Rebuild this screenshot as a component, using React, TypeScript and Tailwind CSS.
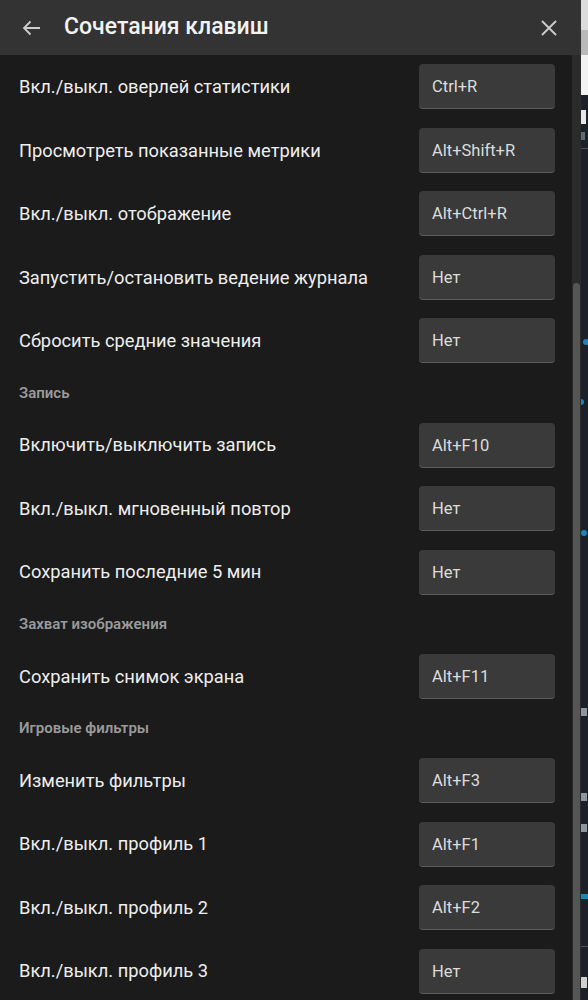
import { Fragment } from "react";

type Item = { label: string; keys: string };
type Group = { title?: string; items: Item[] };

const groups: Group[] = [
  {
    items: [
      { label: "Вкл./выкл. оверлей статистики", keys: "Ctrl+R" },
      { label: "Просмотреть показанные метрики", keys: "Alt+Shift+R" },
      { label: "Вкл./выкл. отображение", keys: "Alt+Ctrl+R" },
      { label: "Запустить/остановить ведение журнала", keys: "Нет" },
      { label: "Сбросить средние значения", keys: "Нет" },
    ],
  },
  {
    title: "Запись",
    items: [
      { label: "Включить/выключить запись", keys: "Alt+F10" },
      { label: "Вкл./выкл. мгновенный повтор", keys: "Нет" },
      { label: "Сохранить последние 5 мин", keys: "Нет" },
    ],
  },
  {
    title: "Захват изображения",
    items: [{ label: "Сохранить снимок экрана", keys: "Alt+F11" }],
  },
  {
    title: "Игровые фильтры",
    items: [
      { label: "Изменить фильтры", keys: "Alt+F3" },
      { label: "Вкл./выкл. профиль 1", keys: "Alt+F1" },
      { label: "Вкл./выкл. профиль 2", keys: "Alt+F2" },
      { label: "Вкл./выкл. профиль 3", keys: "Нет" },
    ],
  },
];

const ShortcutRow = ({ label, keys }: Item) => (
  <div className="flex h-[63.5px] shrink-0 items-center justify-between">
    <span className="text-[18.3px] text-[#eeeeee]">{label}</span>
    <div className="flex h-[45px] w-[136px] items-center rounded-[4px] border-b border-[#5c5c5c] bg-[#3a3a3a] pl-[13px] pt-[3px] text-[16.5px] text-[#dcdcdc]">
      {keys}
    </div>
  </div>
);

// кусок страницы, выглядывающий справа из-под панели
const PageEdge = () => (
  <div className="flex h-full w-[7px] flex-col overflow-hidden bg-[#1c2127]">
    <div className="h-[30px] shrink-0 bg-[#dcdcdc]" />
    <div className="h-[25px] shrink-0 bg-[#b9b9b9]" />
    <div className="h-[40px] shrink-0 bg-[#f2f2f2]" />
    <div className="mt-[15px] h-[14px] w-[5px] shrink-0 bg-[#e6e6e6]" />
    <div className="mt-[8px] h-[8px] w-[4px] shrink-0 bg-[#5d6a76]" />
    <div className="mt-[8px] h-px shrink-0 bg-[#4a525a]" />
    <div className="ml-[2px] mt-[190px] h-[6px] w-[6px] shrink-0 rounded-full bg-[#1a86c0]" />
    <div className="mt-[54px] h-[6px] w-[3px] shrink-0 rounded-r-full bg-[#1a86c0]" />
    <div className="mt-[125px] h-[6px] w-[6px] shrink-0 rounded-full bg-[#1a86c0]" />
    <div className="mt-[172px] h-[8px] w-[6px] shrink-0 bg-[#8e959b]" />
    <div className="mt-[77px] h-[8px] w-[6px] shrink-0 bg-[#8e959b]" />
    <div className="mt-[23px] h-[8px] w-[6px] shrink-0 bg-[#8e959b]" />
    <div className="mt-[62px] h-[5px] shrink-0 bg-[#1a86c0]" />
    <div className="mt-[47px] h-px shrink-0 bg-[#4a525a]" />
    <div className="mt-[30px] h-[11px] w-[6px] shrink-0 bg-[#d0d0d0]" />
  </div>
);

const App = () => {
  return (
    <div
      className="flex h-[1000px] w-[588px] overflow-hidden bg-[#1b1b1b]"
      style={{ fontFamily: "Roboto, 'Noto Sans', sans-serif" }}
    >
      <div className="flex h-full w-[581px] flex-col">
        <header className="flex h-[55px] shrink-0 items-center bg-[#333333] pl-[22px] pr-[24px]">
          <svg width="19" height="16" viewBox="0 0 19 16" fill="none" stroke="#cccccc" strokeWidth="1.8">
            <path d="M18 8H2M8.5 1.5L2 8l6.5 6.5" />
          </svg>
          <h1 className="ml-[23px] flex-1 text-[23px] font-medium text-[#f2f2f2]">Сочетания клавиш</h1>
          <svg width="16" height="16" viewBox="0 0 16 16" fill="none" stroke="#cccccc" strokeWidth="1.9">
            <path d="M1 1l14 14M15 1L1 15" />
          </svg>
        </header>
        <div className="flex min-h-0 flex-1">
          <div className="flex flex-1 flex-col pl-[19px] pr-[17px]">
            {groups.map((g, i) => (
              <Fragment key={i}>
                {g.title && (
                  <div className="flex h-[40.75px] shrink-0 items-center text-[15px] font-semibold text-[#9a9a9a]">
                    {g.title}
                  </div>
                )}
                {g.items.map((it) => (
                  <ShortcutRow key={it.label} {...it} />
                ))}
              </Fragment>
            ))}
          </div>
          <div className="flex w-[9px] flex-col bg-[#2b2b2b] pt-[228px]">
            <div className="ml-px w-[7px] flex-1 rounded-t-[4px] bg-[#555555]" />
          </div>
        </div>
      </div>
      <PageEdge />
    </div>
  );
};

export default App;
